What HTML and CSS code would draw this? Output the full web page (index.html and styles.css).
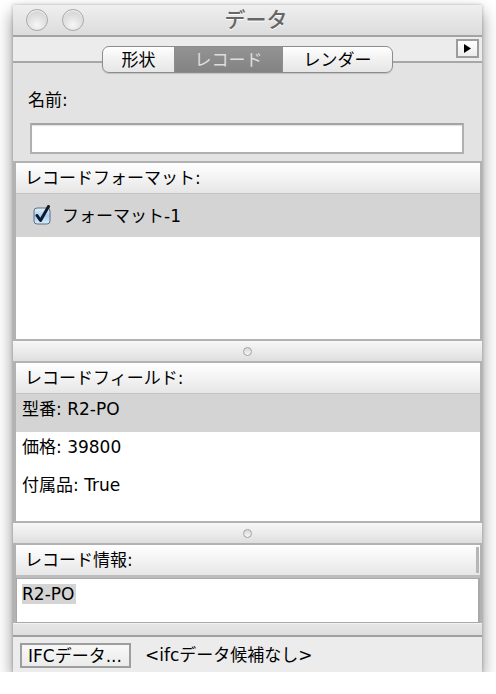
FILE: index.html
```html
<!DOCTYPE html>
<html lang="ja">
<head>
    <meta charset="UTF-8">
    <title>データ</title>
    <link rel="stylesheet" href="styles.css">
</head>
<body>
    <div class="window">
        <div class="titlebar">
            <span class="light"></span>
            <span class="light"></span>
            <span class="title">データ</span>
        </div>

        <div class="toolbar">
            <div class="segmented">
                <span class="seg seg-shape">形状</span>
                <span class="seg seg-record selected">レコード</span>
                <span class="seg seg-render">レンダー</span>
            </div>
            <span class="more">
                <svg width="7" height="9" viewBox="0 0 7 9"><path d="M0 0 L7 4.5 L0 9 Z" fill="#000"/></svg>
            </span>
        </div>

        <div class="form">
            <div class="label">名前:</div>
            <div class="field"></div>
        </div>

        <div class="panel panel-formats">
            <div class="panel-head">レコードフォーマット:</div>
            <div class="format-row selected">
                <svg class="check" width="19" height="20" viewBox="0 0 19 20">
                    <defs>
                        <linearGradient id="aqua" x1="0" y1="0" x2="0" y2="1">
                            <stop offset="0" stop-color="#e6f1fb"/>
                            <stop offset="0.5" stop-color="#a9cdee"/>
                            <stop offset="1" stop-color="#d8ecfc"/>
                        </linearGradient>
                    </defs>
                    <rect x="1" y="3" width="16" height="16" rx="3" fill="url(#aqua)" stroke="#5d6e80" stroke-width="1"/>
                    <path d="M4 10.5 L7.5 15.5 L15.5 1.5" fill="none" stroke="#0d1a2c" stroke-width="3" stroke-linecap="round" stroke-linejoin="round"/>
                </svg>
                <span>フォーマット-1</span>
            </div>
        </div>

        <div class="splitter"><span class="dimple"></span></div>

        <div class="panel panel-fields">
            <div class="panel-head">レコードフィールド:</div>
            <div class="field-row selected">型番: R2-PO</div>
            <div class="field-row">価格: 39800</div>
            <div class="field-row">付属品: True</div>
        </div>

        <div class="splitter"><span class="dimple"></span></div>

        <div class="panel panel-info">
            <div class="panel-head">レコード情報:<span class="scroll"></span></div>
            <div class="info-text"><span class="hl">R2-PO</span></div>
        </div>

        <div class="gap"></div>

        <div class="bottombar">
            <span class="button">IFCデータ...</span>
            <span class="status">&lt;ifcデータ候補なし&gt;</span>
        </div>
    </div>
</body>
</html>
```

FILE: styles.css
```css
body {
    margin: 0;
    background: #fff;
    font-family: "DejaVu Sans", "Noto Sans CJK JP", sans-serif;
    font-size: 17px;
    color: #000;
}

.window {
    margin: 5px 0 0 13px;
    width: 469px;
    height: 667px;
    background: #e3e3e3;
    box-shadow: 0 8px 16px rgba(0, 0, 0, 0.45), 0 0 3px rgba(0, 0, 0, 0.25);
    display: flex;
    flex-direction: column;
    overflow: hidden;
}

/* title bar */
.titlebar {
    height: 30px;
    display: flex;
    align-items: center;
    padding-left: 13px;
    gap: 14px;
    background: linear-gradient(#efefef, #dcdcdc);
    border-bottom: 2px solid #a3a3a3;
}
.light {
    width: 20px;
    height: 20px;
    border-radius: 50%;
    border: 1px solid #a9a9a9;
    background: radial-gradient(circle at 50% 75%, #f6f6f6, #dcdcdc 60%, #c9c9c9);
    box-shadow: inset 0 1px 1px rgba(255, 255, 255, 0.9);
}
.title {
    flex: 1;
    text-align: center;
    margin-left: -68px;
    font-size: 21px;
    line-height: 24px;
    color: #666;
    font-weight: 500;
    text-shadow: 0 1px 0 #fff;
}

/* toolbar with segmented control */
.toolbar {
    height: 24px;
    background: #ececec;
    border-bottom: 2px solid #a7a7a7;
    display: grid;
    grid-template-columns: 1fr auto 1fr;
    align-items: start;
}
.segmented {
    grid-column: 2;
    margin-top: 9px;
    height: 25px;
    display: flex;
    border: 1px solid #8d8d8d;
    border-radius: 7px;
    background: linear-gradient(#ffffff, #f1f1f1 50%, #e6e6e6);
    overflow: hidden;
    position: relative;
    z-index: 1;
    box-shadow: 0 1px 1px rgba(0, 0, 0, 0.15);
}
.seg {
    display: flex;
    align-items: center;
    justify-content: center;
    line-height: 20px;
}
.seg-shape { width: 71px; border-right: 1px solid #8d8d8d; }
.seg-record { width: 107px; border-right: 1px solid #8d8d8d; }
.seg-render { width: 109px; }
.seg.selected {
    background: linear-gradient(#939393, #838383);
    color: #dedede;
}
.more {
    justify-self: end;
    margin: 2px 3px 0 0;
    width: 19px;
    height: 15px;
    border: 2px solid #9c9c9c;
    background: linear-gradient(#ffffff, #ececec);
    display: flex;
    align-items: center;
    justify-content: center;
}

/* name field */
.form {
    height: 98px;
    padding: 0 18px 0 17px;
}
.label {
    margin: 27px 0 0 -2px;
    line-height: 20px;
}
.field {
    margin-top: 13px;
    height: 27px;
    border: 2px solid #b0b0b0;
    border-top-color: #a4a4a4;
    background: #fff;
    box-shadow: inset 0 1px 1px rgba(0, 0, 0, 0.12);
}

/* list panels */
.panel {
    border: 2px solid #b2b2b2;
    border-left-width: 3px;
    background: #fff;
    display: flex;
    flex-direction: column;
}
.panel-head {
    height: 30px;
    line-height: 30px;
    padding-left: 9px;
    background: linear-gradient(#ffffff, #f3f3f3 50%, #e6e6e6);
    border-bottom: 1px solid #c4c4c4;
    display: flex;
}
.selected {
    background: #d4d4d4;
}

.panel-formats {
    height: 176px;
}
.format-row {
    height: 43px;
    display: flex;
    align-items: center;
    gap: 10px;
    padding-left: 17px;
    line-height: 20px;
}
.format-row.selected {
    background: #d4d4d4;
}
.check {
    margin-top: -2px;
}

.panel-fields {
    height: 158px;
}
.field-row {
    height: 33px;
    padding: 5px 0 0 6px;
    line-height: 20px;
}

.splitter {
    height: 20px;
    background: linear-gradient(#f7f7f7, #e9e9e9 60%, #dedede);
    display: flex;
    align-items: center;
    justify-content: center;
}
.dimple {
    width: 7px;
    height: 7px;
    border-radius: 50%;
    border: 1px solid #a3a3a3;
    background: linear-gradient(#d8d8d8, #f6f6f6);
}

.panel-info {
    height: 78px;
    background: #e3e3e3;
    border-bottom: none;
}
.panel-info .panel-head {
    border-bottom: 3px solid #bdbdbd;
    justify-content: space-between;
}
.scroll {
    width: 3px;
    height: 26px;
    margin: 2px 1px 0 0;
    background: #b6b6b6;
}
.info-text {
    flex: 1;
    background: #fff;
    border: 1px solid #a9a9a9;
    border-right-width: 2px;
    padding: 4px 0 0 5px;
    line-height: 22px;
}
.hl {
    background: #d4d4d4;
    padding-right: 2px;
}

.gap {
    height: 11px;
    background: linear-gradient(#e6e6e6, #dedede);
    border-top: 1px solid #f2f2f2;
    border-bottom: 2px solid #9f9f9f;
}

.bottombar {
    flex: 1;
    background: #ececec;
    display: flex;
    align-items: center;
    gap: 14px;
    padding-left: 7px;
}
.button {
    width: 101px;
    height: 21px;
    border: 2px solid #9d9d9d;
    background: linear-gradient(#f8f8f8, #ebebeb);
    padding-left: 6px;
    box-sizing: content-box;
    line-height: 22px;
    margin-top: 2px;
    white-space: nowrap;
}
.status {
    line-height: 20px;
    margin-top: 1px;
}
```
